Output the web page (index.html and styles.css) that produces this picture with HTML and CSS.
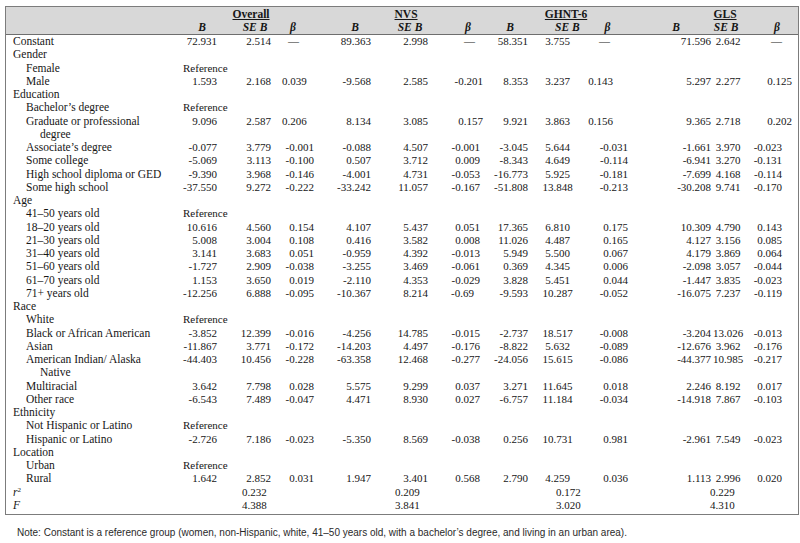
FILE: index.html
```html
<!DOCTYPE html>
<html lang="en">
<head>
<meta charset="utf-8">
<title>Regression table</title>
<link rel="stylesheet" href="styles.css">
</head>
<body>
<div class="page">
  <div class="box">
    <table class="t">
      <colgroup>
        <col class="w1"><col class="w2"><col class="w3"><col class="w4"><col class="w5"><col class="w6"><col class="w7"><col class="w8"><col class="w9"><col class="w10"><col class="w11"><col class="w12"><col class="w13">
      </colgroup>
      <thead>
        <tr class="h1">
          <th></th>
          <th colspan="3" class="g-o"><span class="u">Overall</span></th>
          <th colspan="3" class="g-n"><span class="u">NVS</span></th>
          <th colspan="3" class="g-g"><span class="u">GHNT-6</span></th>
          <th colspan="3" class="g-l"><span class="u">GLS</span></th>
        </tr>
        <tr class="h2">
          <th></th>
          <th>B</th><th>SE B</th><th>β</th>
          <th>B</th><th>SE B</th><th>β</th>
          <th>B</th><th>SE B</th><th>β</th>
          <th>B</th><th>SE B</th><th>β</th>
        </tr>
      </thead>
      <tbody>
        <tr class="d top"><td class="cat">Constant</td><td>72.931</td><td>2.514</td><td class="dash">—</td><td>89.363</td><td>2.998</td><td class="dash">—</td><td>58.351</td><td>3.755</td><td class="dash">—</td><td>71.596</td><td>2.642</td><td class="dash">—</td></tr>
        <tr><td class="cat" colspan="13">Gender</td></tr>
        <tr class="r"><td class="sub">Female</td><td colspan="12" class="ref">Reference</td></tr>
        <tr class="d top"><td class="sub">Male</td><td>1.593</td><td>2.168</td><td>0.039</td><td>-9.568</td><td>2.585</td><td>-0.201</td><td>8.353</td><td>3.237</td><td>0.143</td><td>5.297</td><td>2.277</td><td>0.125</td></tr>
        <tr><td class="cat" colspan="13">Education</td></tr>
        <tr class="r"><td class="sub">Bachelor’s degree</td><td colspan="12" class="ref">Reference</td></tr>
        <tr class="d top"><td class="sub">Graduate or professional<br><span class="cont">degree</span></td><td>9.096</td><td>2.587</td><td>0.206</td><td>8.134</td><td>3.085</td><td>0.157</td><td>9.921</td><td>3.863</td><td>0.156</td><td>9.365</td><td>2.718</td><td>0.202</td></tr>
        <tr class="d"><td class="sub">Associate’s degree</td><td>-0.077</td><td>3.779</td><td>-0.001</td><td>-0.088</td><td>4.507</td><td>-0.001</td><td>-3.045</td><td>5.644</td><td>-0.031</td><td>-1.661</td><td>3.970</td><td>-0.023</td></tr>
        <tr class="d"><td class="sub">Some college</td><td>-5.069</td><td>3.113</td><td>-0.100</td><td>0.507</td><td>3.712</td><td>0.009</td><td>-8.343</td><td>4.649</td><td>-0.114</td><td>-6.941</td><td>3.270</td><td>-0.131</td></tr>
        <tr class="d"><td class="sub">High school diploma or GED</td><td>-9.390</td><td>3.968</td><td>-0.146</td><td>-4.001</td><td>4.731</td><td>-0.053</td><td>-16.773</td><td>5.925</td><td>-0.181</td><td>-7.699</td><td>4.168</td><td>-0.114</td></tr>
        <tr class="d"><td class="sub">Some high school</td><td>-37.550</td><td>9.272</td><td>-0.222</td><td>-33.242</td><td>11.057</td><td>-0.167</td><td>-51.808</td><td>13.848</td><td>-0.213</td><td>-30.208</td><td>9.741</td><td>-0.170</td></tr>
        <tr><td class="cat" colspan="13">Age</td></tr>
        <tr class="r"><td class="sub">41–50 years old</td><td colspan="12" class="ref">Reference</td></tr>
        <tr class="d"><td class="sub">18–20 years old</td><td>10.616</td><td>4.560</td><td>0.154</td><td>4.107</td><td>5.437</td><td>0.051</td><td>17.365</td><td>6.810</td><td>0.175</td><td>10.309</td><td>4.790</td><td>0.143</td></tr>
        <tr class="d"><td class="sub">21–30 years old</td><td>5.008</td><td>3.004</td><td>0.108</td><td>0.416</td><td>3.582</td><td>0.008</td><td>11.026</td><td>4.487</td><td>0.165</td><td>4.127</td><td>3.156</td><td>0.085</td></tr>
        <tr class="d"><td class="sub">31–40 years old</td><td>3.141</td><td>3.683</td><td>0.051</td><td>-0.959</td><td>4.392</td><td>-0.013</td><td>5.949</td><td>5.500</td><td>0.067</td><td>4.179</td><td>3.869</td><td>0.064</td></tr>
        <tr class="d"><td class="sub">51–60 years old</td><td>-1.727</td><td>2.909</td><td>-0.038</td><td>-3.255</td><td>3.469</td><td>-0.061</td><td>0.369</td><td>4.345</td><td>0.006</td><td>-2.098</td><td>3.057</td><td>-0.044</td></tr>
        <tr class="d"><td class="sub">61–70 years old</td><td>1.153</td><td>3.650</td><td>0.019</td><td>-2.110</td><td>4.353</td><td>-0.029</td><td>3.828</td><td>5.451</td><td>0.044</td><td>-1.447</td><td>3.835</td><td>-0.023</td></tr>
        <tr class="d"><td class="sub">71+ years old</td><td>-12.256</td><td>6.888</td><td>-0.095</td><td>-10.367</td><td>8.214</td><td class="two">-0.69</td><td>-9.593</td><td>10.287</td><td>-0.052</td><td>-16.075</td><td>7.237</td><td>-0.119</td></tr>
        <tr><td class="cat" colspan="13">Race</td></tr>
        <tr class="r"><td class="sub">White</td><td colspan="12" class="ref">Reference</td></tr>
        <tr class="d"><td class="sub">Black or African American</td><td>-3.852</td><td>12.399</td><td>-0.016</td><td>-4.256</td><td>14.785</td><td>-0.015</td><td>-2.737</td><td>18.517</td><td>-0.008</td><td>-3.204</td><td>13.026</td><td>-0.013</td></tr>
        <tr class="d"><td class="sub">Asian</td><td>-11.867</td><td>3.771</td><td>-0.172</td><td>-14.203</td><td>4.497</td><td>-0.176</td><td>-8.822</td><td>5.632</td><td>-0.089</td><td>-12.676</td><td>3.962</td><td>-0.176</td></tr>
        <tr class="d"><td class="sub">American Indian/ Alaska<br><span class="cont">Native</span></td><td>-44.403</td><td>10.456</td><td>-0.228</td><td>-63.358</td><td>12.468</td><td>-0.277</td><td>-24.056</td><td>15.615</td><td>-0.086</td><td>-44.377</td><td>10.985</td><td>-0.217</td></tr>
        <tr class="d"><td class="sub">Multiracial</td><td>3.642</td><td>7.798</td><td>0.028</td><td>5.575</td><td>9.299</td><td>0.037</td><td>3.271</td><td>11.645</td><td>0.018</td><td>2.246</td><td>8.192</td><td>0.017</td></tr>
        <tr class="d"><td class="sub">Other race</td><td>-6.543</td><td>7.489</td><td>-0.047</td><td>4.471</td><td>8.930</td><td>0.027</td><td>-6.757</td><td>11.184</td><td>-0.034</td><td>-14.918</td><td>7.867</td><td>-0.103</td></tr>
        <tr><td class="cat" colspan="13">Ethnicity</td></tr>
        <tr class="r"><td class="sub">Not Hispanic or Latino</td><td colspan="12" class="ref">Reference</td></tr>
        <tr class="d"><td class="sub">Hispanic or Latino</td><td>-2.726</td><td>7.186</td><td>-0.023</td><td>-5.350</td><td>8.569</td><td>-0.038</td><td>0.256</td><td>10.731</td><td>0.981</td><td>-2.961</td><td>7.549</td><td>-0.023</td></tr>
        <tr><td class="cat" colspan="13">Location</td></tr>
        <tr class="r"><td class="sub">Urban</td><td colspan="12" class="ref">Reference</td></tr>
        <tr class="d"><td class="sub">Rural</td><td>1.642</td><td>2.852</td><td>0.031</td><td>1.947</td><td>3.401</td><td>0.568</td><td>2.790</td><td>4.259</td><td>0.036</td><td>1.113</td><td>2.996</td><td>0.020</td></tr>
        <tr class="s"><td class="cat"><i>r</i><span class="sup">2</span></td><td colspan="3" class="s-o">0.232</td><td colspan="3" class="s-n">0.209</td><td colspan="3" class="s-g">0.172</td><td colspan="3" class="s-l">0.229</td></tr>
        <tr class="s last"><td class="cat"><i>F</i></td><td colspan="3" class="s-o">4.388</td><td colspan="3" class="s-n">3.841</td><td colspan="3" class="s-g">3.020</td><td colspan="3" class="s-l">4.310</td></tr>
      </tbody>
    </table>
  </div>
  <p class="note">Note: Constant is a reference group (women, non-Hispanic, white, 41–50 years old, with a bachelor’s degree, and living in an urban area).</p>
</div>
</body>
</html>
```

FILE: styles.css
```css
html, body {
  margin: 0;
  padding: 0;
  background: #ffffff;
}

.page {
  padding: 6px 0 0 5px;
}

.box {
  width: 792px;
  border: 1px solid #7c7c7c;
  padding-bottom: 2px;
}

.t {
  width: 792px;
  table-layout: fixed;
  border-collapse: collapse;
  font-family: "Liberation Serif", "Times New Roman", serif;
  font-size: 11.5px;
  color: #161616;
}

.w1 { width: 166px; }
.w2 { width: 60px; }
.w3 { width: 50px; }
.w4 { width: 48px; }
.w5 { width: 55px; }
.w6 { width: 55px; }
.w7 { width: 52px; }
.w8 { width: 48px; }
.w9 { width: 35px; }
.w10 { width: 65px; }
.w11 { width: 72px; }
.w12 { width: 32px; }
.w13 { width: 54px; }

.t th,
.t td {
  padding: 0;
  white-space: nowrap;
  vertical-align: top;
}

thead {
  background: #d8d8d8;
}

.t th {
  line-height: 13px;
  font-weight: bold;
  text-align: center;
}

.h1 th {
  padding-top: 1px;
}

.h2 th {
  font-style: italic;
  border-bottom: 1px solid #6e6e6e;
}

.u {
  text-decoration: underline;
  text-underline-offset: 1px;
}

.g-n { padding-right: 10px !important; }
.g-l { padding-left: 12px !important; }

.h2 th:nth-child(3) { padding-right: 4px; }
.h2 th:nth-child(4) { text-align: left; padding-left: 8px; }
.h2 th:nth-child(5) { padding-right: 5px; }
.h2 th:nth-child(6) { padding-right: 5px; }
.h2 th:nth-child(7) { padding-left: 4px; }
.h2 th:nth-child(8) { padding-right: 12px; }
.h2 th:nth-child(9) { text-align: left; padding-left: 15px; }
.h2 th:nth-child(12) { padding-right: 4px; }
.h2 th:nth-child(13) { padding-left: 12px; }

.t td {
  line-height: 13.25px;
}

.t td.cat {
  padding-left: 7px;
  text-align: left;
}

.t td.sub {
  padding-left: 20px;
  text-align: left;
}

.cont {
  padding-left: 14px;
}

.t td.ref {
  text-align: left;
  padding-left: 11px;
  font-size: 11px;
}

.sup {
  font-size: 7px;
  vertical-align: 4px;
  line-height: 0;
}

/* data rows: decimal-aligned columns */
.d td { text-align: right; font-size: 11px; }
.d td:nth-child(2) { padding-right: 15px; }
.d td:nth-child(3) { padding-right: 11px; }
.d td:nth-child(4) { padding-right: 16px; }
.d td:nth-child(5) { padding-right: 14px; }
.d td:nth-child(6) { padding-right: 12px; }
.d td:nth-child(7) { padding-right: 12px; }
.d td:nth-child(8) { padding-right: 12px; }
.d td:nth-child(9) { text-align: center; }
.d td:nth-child(10) { padding-right: 12px; }
.d td:nth-child(11) { padding-right: 1px; }
.d td:nth-child(12) { text-align: center; }
.d td:nth-child(13) { padding-right: 16px; }

.d td:first-child { text-align: left; font-size: 11.5px; }

.top td:nth-child(4) { padding-right: 24px; }
.top td:nth-child(7) { padding-right: 9px; }
.top td:nth-child(10) { padding-right: 27px; }
.top td:nth-child(13) { padding-right: 6px; }

.top td.dash:nth-child(4) { padding-right: 31px; }
.top td.dash:nth-child(7) { padding-right: 17px; }
.top td.dash:nth-child(10) { padding-right: 30px; }
.top td.dash:nth-child(13) { padding-right: 16px; }

.d td.two { padding-right: 18px; }

/* summary rows */
.s td { text-align: left; font-size: 11px; }
.s td.cat { font-size: 11.5px; }
.s td.s-o { padding-left: 70px; }
.s td.s-n { padding-left: 65px; }
.s td.s-g { padding-left: 64px; }
.s td.s-l { padding-left: 70px; }

.note {
  margin: 11px 0 0 12px;
  font-family: "Liberation Sans", Arial, sans-serif;
  font-size: 10px;
  line-height: 14px;
  color: #2a2a2a;
}
```
